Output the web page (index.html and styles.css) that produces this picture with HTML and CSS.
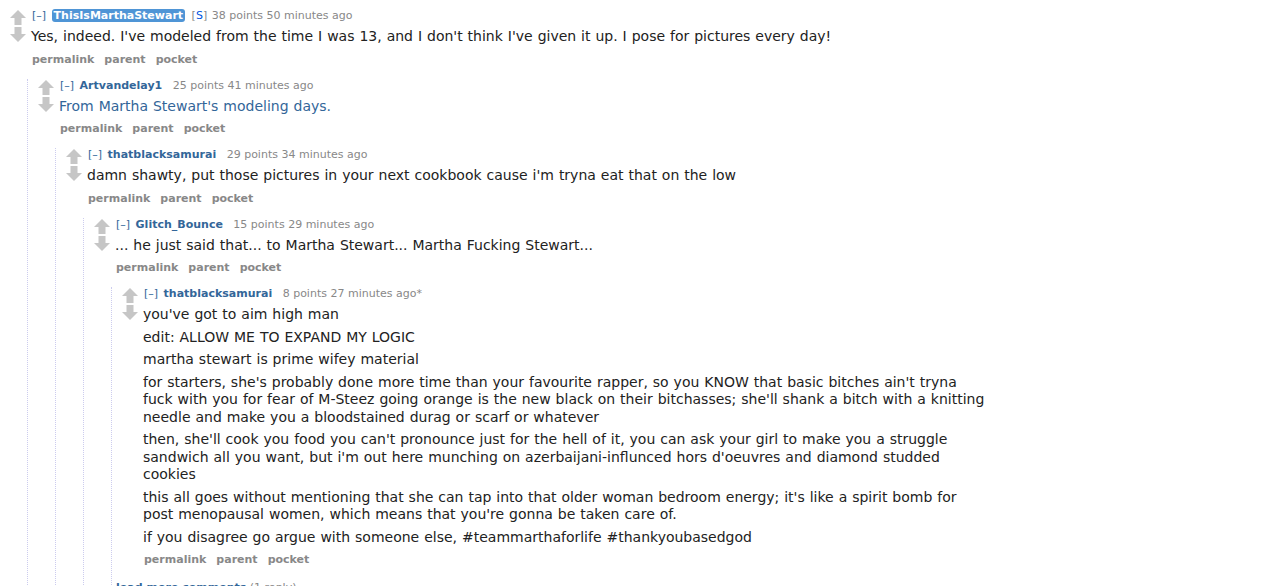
FILE: index.html
```html
<!DOCTYPE html>
<html>
<head>
<meta charset="utf-8">
<title>comments</title>
<link rel="stylesheet" href="styles.css">
</head>
<body>
<div class="commentarea">

<div class="comment">
  <div class="row">
    <div class="midcol">
      <svg class="arrow" viewBox="0 0 16 15"><polygon points="8,0 16,8 11.5,8 11.5,15 4.5,15 4.5,8 0,8"/></svg>
      <svg class="arrow" viewBox="0 0 16 15"><polygon points="8,15 16,7 11.5,7 11.5,0 4.5,0 4.5,7 0,7"/></svg>
    </div>
    <div class="entry">
      <p class="tagline"><span class="expand">[–]</span> <span class="author op">ThisIsMarthaStewart</span> <span class="sub">[<span class="s">S</span>]</span> <span class="score">38 points</span> <span class="time">50 minutes ago</span></p>
      <div class="md"><p>Yes, indeed. I've modeled from the time I was 13, and I don't think I've given it up. I pose for pictures every day!</p></div>
      <ul class="buttons"><li>permalink</li><li>parent</li><li>pocket</li></ul>
    </div>
  </div>
  <div class="child">

    <div class="comment">
      <div class="row">
        <div class="midcol">
          <svg class="arrow" viewBox="0 0 16 15"><polygon points="8,0 16,8 11.5,8 11.5,15 4.5,15 4.5,8 0,8"/></svg>
          <svg class="arrow" viewBox="0 0 16 15"><polygon points="8,15 16,7 11.5,7 11.5,0 4.5,0 4.5,7 0,7"/></svg>
        </div>
        <div class="entry">
          <p class="tagline"><span class="expand">[–]</span> <span class="author">Artvandelay1</span> <span class="score">25 points</span> <span class="time">41 minutes ago</span></p>
          <div class="md"><p><a class="link">From Martha Stewart's modeling days.</a></p></div>
          <ul class="buttons"><li>permalink</li><li>parent</li><li>pocket</li></ul>
        </div>
      </div>
      <div class="child">

        <div class="comment">
          <div class="row">
            <div class="midcol">
              <svg class="arrow" viewBox="0 0 16 15"><polygon points="8,0 16,8 11.5,8 11.5,15 4.5,15 4.5,8 0,8"/></svg>
              <svg class="arrow" viewBox="0 0 16 15"><polygon points="8,15 16,7 11.5,7 11.5,0 4.5,0 4.5,7 0,7"/></svg>
            </div>
            <div class="entry">
              <p class="tagline"><span class="expand">[–]</span> <span class="author">thatblacksamurai</span> <span class="score">29 points</span> <span class="time">34 minutes ago</span></p>
              <div class="md"><p>damn shawty, put those pictures in your next cookbook cause i'm tryna eat that on the low</p></div>
              <ul class="buttons"><li>permalink</li><li>parent</li><li>pocket</li></ul>
            </div>
          </div>
          <div class="child">

            <div class="comment">
              <div class="row">
                <div class="midcol">
                  <svg class="arrow" viewBox="0 0 16 15"><polygon points="8,0 16,8 11.5,8 11.5,15 4.5,15 4.5,8 0,8"/></svg>
                  <svg class="arrow" viewBox="0 0 16 15"><polygon points="8,15 16,7 11.5,7 11.5,0 4.5,0 4.5,7 0,7"/></svg>
                </div>
                <div class="entry">
                  <p class="tagline"><span class="expand">[–]</span> <span class="author">Glitch_Bounce</span> <span class="score">15 points</span> <span class="time">29 minutes ago</span></p>
                  <div class="md"><p>... he just said that... to Martha Stewart... Martha Fucking Stewart...</p></div>
                  <ul class="buttons"><li>permalink</li><li>parent</li><li>pocket</li></ul>
                </div>
              </div>
              <div class="child">

                <div class="comment">
                  <div class="row">
                    <div class="midcol">
                      <svg class="arrow" viewBox="0 0 16 15"><polygon points="8,0 16,8 11.5,8 11.5,15 4.5,15 4.5,8 0,8"/></svg>
                      <svg class="arrow" viewBox="0 0 16 15"><polygon points="8,15 16,7 11.5,7 11.5,0 4.5,0 4.5,7 0,7"/></svg>
                    </div>
                    <div class="entry">
                      <p class="tagline"><span class="expand">[–]</span> <span class="author">thatblacksamurai</span> <span class="score">8 points</span> <span class="time">27 minutes ago</span><span class="edited">*</span></p>
                      <div class="md">
                        <p>you've got to aim high man</p>
                        <p>edit: ALLOW ME TO EXPAND MY LOGIC</p>
                        <p>martha stewart is prime wifey material</p>
                        <p>for starters, she's probably done more time than your favourite rapper, so you KNOW that basic bitches ain't tryna fuck with you for fear of M-Steez going orange is the new black on their bitchasses; she'll shank a bitch with a knitting needle and make you a bloodstained durag or scarf or whatever</p>
                        <p>then, she'll cook you food you can't pronounce just for the hell of it, you can ask your girl to make you a struggle sandwich all you want, but i'm out here munching on azerbaijani-influnced hors d'oeuvres and diamond studded cookies</p>
                        <p>this all goes without mentioning that she can tap into that older woman bedroom energy; it's like a spirit bomb for post menopausal women, which means that you're gonna be taken care of.</p>
                        <p>if you disagree go argue with someone else, #teammarthaforlife #thankyoubasedgod</p>
                      </div>
                      <ul class="buttons"><li>permalink</li><li>parent</li><li>pocket</li></ul>
                    </div>
                  </div>
                </div>

                <div class="morechildren"><span class="more">load more comments</span> <span class="count">(1 reply)</span></div>

              </div>
            </div>

          </div>
        </div>

      </div>
    </div>

  </div>
</div>

</div>
</body>
</html>
```

FILE: styles.css
```css
html, body {
  margin: 0;
  padding: 0;
  background: #ffffff;
}

body {
  font-family: "DejaVu Sans", Verdana, sans-serif;
  color: #222222;
}

.commentarea {
  padding-top: 9px;
}

.comment {
  margin-left: 10px;
}

.row {
  display: flex;
  align-items: flex-start;
}

.midcol {
  width: 16px;
  margin-right: 5px;
  padding-top: 1px;
  display: flex;
  flex-direction: column;
  gap: 2px;
  flex-shrink: 0;
}

.arrow {
  width: 16px;
  height: 15px;
  display: block;
  fill: #c6c6c6;
}

.entry {
  flex: 1;
  min-width: 0;
}

.tagline {
  margin: 0;
  font-size: 11px;
  line-height: 14px;
  color: #888888;
  white-space: nowrap;
}

.expand {
  color: #369;
  margin-left: 1px;
  margin-right: 2px;
}

.author {
  color: #369;
  font-weight: bold;
  margin-right: 7px;
}

.author.op {
  color: #ffffff;
  background: #4f95d6;
  border-radius: 3px;
  padding: 0 2px;
  margin-right: 3px;
}

.sub {
  color: #888888;
  margin-right: 1px;
}

.sub .s {
  color: #0055df;
}

.md {
  padding-top: 5px;
  font-size: 14px;
  line-height: 17.5px;
  word-spacing: 0.5px;
  max-width: 843px;
}

.md p {
  margin: 0 0 5px 0;
}

.link {
  color: #336699;
  text-decoration: none;
}

.buttons {
  list-style: none;
  margin: 0;
  padding: 1px 0 1px 1px;
  display: flex;
  gap: 10px;
  font-size: 11px;
  line-height: 16px;
  font-weight: bold;
  color: #888888;
}

.child {
  margin-left: 17px;
  margin-top: 10px;
  border-left: 1px dotted #ccccee;
}

.morechildren {
  margin-left: 4px;
  margin-top: 12px;
  font-size: 11px;
  line-height: 14px;
}

.more {
  color: #369;
  font-weight: bold;
}

.count {
  color: #888888;
}
```
